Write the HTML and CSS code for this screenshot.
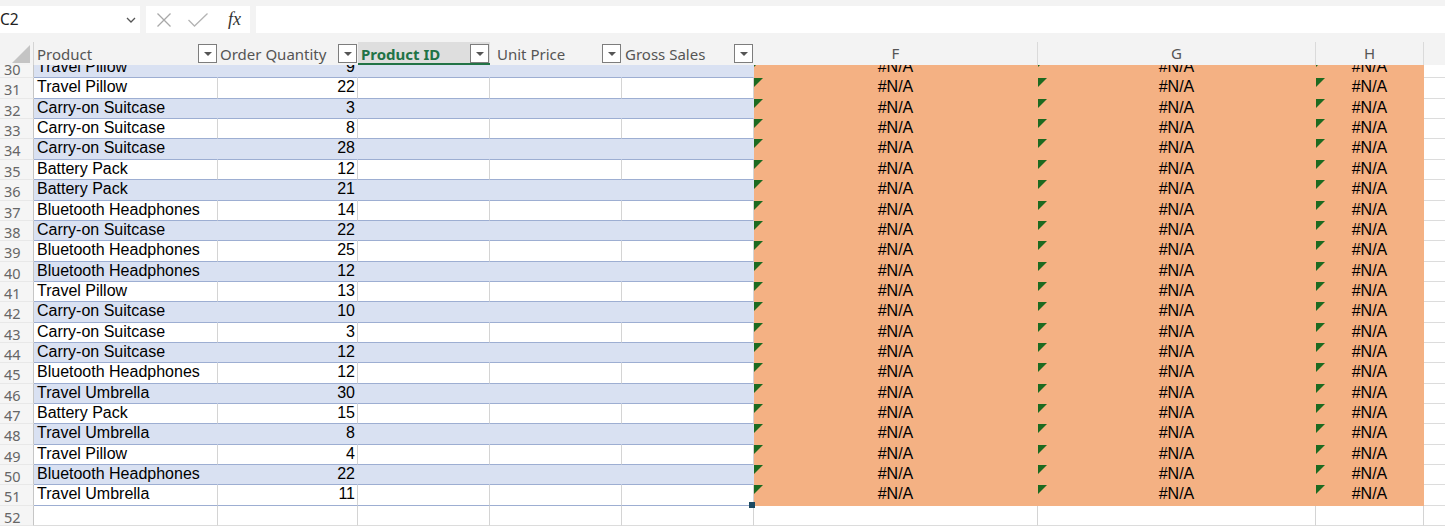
FILE: index.html
```html
<!DOCTYPE html>
<html>
<head>
<meta charset="utf-8">
<link rel="stylesheet" href="styles.css">
</head>
<body>
<div class="app">
  <div class="fbar">
    <div class="namebox">
      <span class="nbtext">C2</span>
      <svg class="chev" width="10" height="6" viewBox="0 0 10 6"><path d="M1 1 L5 5 L9 1" fill="none" stroke="#555" stroke-width="1.3"/></svg>
    </div>
    <div class="fxbox">
      <svg class="ic" width="16" height="16" viewBox="0 0 16 16"><path d="M1.5 1.5 L14.5 14.5 M14.5 1.5 L1.5 14.5" fill="none" stroke="#a8a8a8" stroke-width="1.3"/></svg>
      <svg class="ic" width="22" height="16" viewBox="0 0 22 16"><path d="M1.5 8 L7.5 14 L20.5 1.5" fill="none" stroke="#b4b4b4" stroke-width="1.3"/></svg>
      <span class="fx">fx</span>
    </div>
    <div class="finput"></div>
  </div>

  <div class="colhdr">
    <div class="corner"><svg width="34" height="23" viewBox="0 0 34 23"><polygon points="12,21 30,3 30,21" fill="#c4c4c4"/></svg></div>
    <div class="th"><span>Product</span><span class="flt"></span></div>
    <div class="th tight"><span>Order Quantity</span><span class="flt"></span></div>
    <div class="th sel"><span>Product ID</span><span class="flt"></span></div>
    <div class="th wide"><span>Unit Price</span><span class="flt"></span></div>
    <div class="th"><span>Gross Sales</span><span class="flt"></span></div>
    <div class="col">F</div>
    <div class="col">G</div>
    <div class="col">H</div>
    <div class="col rest"></div>
  </div>

  <div class="body">
    <div class="rows">
      <div class="row b"><div class="rh">30</div><div class="a">Travel Pillow</div><div class="n">9</div><div class="c"></div><div class="c"></div><div class="c"></div><div class="e">#N/A</div><div class="e">#N/A</div><div class="e">#N/A</div><div class="i"></div></div>
      <div class="row"><div class="rh">31</div><div class="a">Travel Pillow</div><div class="n">22</div><div class="c"></div><div class="c"></div><div class="c"></div><div class="e">#N/A</div><div class="e">#N/A</div><div class="e">#N/A</div><div class="i"></div></div>
      <div class="row b"><div class="rh">32</div><div class="a">Carry-on Suitcase</div><div class="n">3</div><div class="c"></div><div class="c"></div><div class="c"></div><div class="e">#N/A</div><div class="e">#N/A</div><div class="e">#N/A</div><div class="i"></div></div>
      <div class="row"><div class="rh">33</div><div class="a">Carry-on Suitcase</div><div class="n">8</div><div class="c"></div><div class="c"></div><div class="c"></div><div class="e">#N/A</div><div class="e">#N/A</div><div class="e">#N/A</div><div class="i"></div></div>
      <div class="row b"><div class="rh">34</div><div class="a">Carry-on Suitcase</div><div class="n">28</div><div class="c"></div><div class="c"></div><div class="c"></div><div class="e">#N/A</div><div class="e">#N/A</div><div class="e">#N/A</div><div class="i"></div></div>
      <div class="row"><div class="rh">35</div><div class="a">Battery Pack</div><div class="n">12</div><div class="c"></div><div class="c"></div><div class="c"></div><div class="e">#N/A</div><div class="e">#N/A</div><div class="e">#N/A</div><div class="i"></div></div>
      <div class="row b"><div class="rh">36</div><div class="a">Battery Pack</div><div class="n">21</div><div class="c"></div><div class="c"></div><div class="c"></div><div class="e">#N/A</div><div class="e">#N/A</div><div class="e">#N/A</div><div class="i"></div></div>
      <div class="row"><div class="rh">37</div><div class="a">Bluetooth Headphones</div><div class="n">14</div><div class="c"></div><div class="c"></div><div class="c"></div><div class="e">#N/A</div><div class="e">#N/A</div><div class="e">#N/A</div><div class="i"></div></div>
      <div class="row b"><div class="rh">38</div><div class="a">Carry-on Suitcase</div><div class="n">22</div><div class="c"></div><div class="c"></div><div class="c"></div><div class="e">#N/A</div><div class="e">#N/A</div><div class="e">#N/A</div><div class="i"></div></div>
      <div class="row"><div class="rh">39</div><div class="a">Bluetooth Headphones</div><div class="n">25</div><div class="c"></div><div class="c"></div><div class="c"></div><div class="e">#N/A</div><div class="e">#N/A</div><div class="e">#N/A</div><div class="i"></div></div>
      <div class="row b"><div class="rh">40</div><div class="a">Bluetooth Headphones</div><div class="n">12</div><div class="c"></div><div class="c"></div><div class="c"></div><div class="e">#N/A</div><div class="e">#N/A</div><div class="e">#N/A</div><div class="i"></div></div>
      <div class="row"><div class="rh">41</div><div class="a">Travel Pillow</div><div class="n">13</div><div class="c"></div><div class="c"></div><div class="c"></div><div class="e">#N/A</div><div class="e">#N/A</div><div class="e">#N/A</div><div class="i"></div></div>
      <div class="row b"><div class="rh">42</div><div class="a">Carry-on Suitcase</div><div class="n">10</div><div class="c"></div><div class="c"></div><div class="c"></div><div class="e">#N/A</div><div class="e">#N/A</div><div class="e">#N/A</div><div class="i"></div></div>
      <div class="row"><div class="rh">43</div><div class="a">Carry-on Suitcase</div><div class="n">3</div><div class="c"></div><div class="c"></div><div class="c"></div><div class="e">#N/A</div><div class="e">#N/A</div><div class="e">#N/A</div><div class="i"></div></div>
      <div class="row b"><div class="rh">44</div><div class="a">Carry-on Suitcase</div><div class="n">12</div><div class="c"></div><div class="c"></div><div class="c"></div><div class="e">#N/A</div><div class="e">#N/A</div><div class="e">#N/A</div><div class="i"></div></div>
      <div class="row"><div class="rh">45</div><div class="a">Bluetooth Headphones</div><div class="n">12</div><div class="c"></div><div class="c"></div><div class="c"></div><div class="e">#N/A</div><div class="e">#N/A</div><div class="e">#N/A</div><div class="i"></div></div>
      <div class="row b"><div class="rh">46</div><div class="a">Travel Umbrella</div><div class="n">30</div><div class="c"></div><div class="c"></div><div class="c"></div><div class="e">#N/A</div><div class="e">#N/A</div><div class="e">#N/A</div><div class="i"></div></div>
      <div class="row"><div class="rh">47</div><div class="a">Battery Pack</div><div class="n">15</div><div class="c"></div><div class="c"></div><div class="c"></div><div class="e">#N/A</div><div class="e">#N/A</div><div class="e">#N/A</div><div class="i"></div></div>
      <div class="row b"><div class="rh">48</div><div class="a">Travel Umbrella</div><div class="n">8</div><div class="c"></div><div class="c"></div><div class="c"></div><div class="e">#N/A</div><div class="e">#N/A</div><div class="e">#N/A</div><div class="i"></div></div>
      <div class="row"><div class="rh">49</div><div class="a">Travel Pillow</div><div class="n">4</div><div class="c"></div><div class="c"></div><div class="c"></div><div class="e">#N/A</div><div class="e">#N/A</div><div class="e">#N/A</div><div class="i"></div></div>
      <div class="row b"><div class="rh">50</div><div class="a">Bluetooth Headphones</div><div class="n">22</div><div class="c"></div><div class="c"></div><div class="c"></div><div class="e">#N/A</div><div class="e">#N/A</div><div class="e">#N/A</div><div class="i"></div></div>
      <div class="row"><div class="rh">51</div><div class="a">Travel Umbrella</div><div class="n">11</div><div class="c"></div><div class="c"></div><div class="c handle"></div><div class="e">#N/A</div><div class="e">#N/A</div><div class="e">#N/A</div><div class="i"></div></div>
      <div class="row empty"><div class="rh">52</div><div class="a"></div><div class="n"></div><div class="c"></div><div class="c"></div><div class="c"></div><div class="w"></div><div class="w"></div><div class="w"></div><div class="i"></div></div>
    </div>
  </div>
</div>
</body>
</html>
```

FILE: styles.css
```css
html, body {
  margin: 0;
  padding: 0;
}
body {
  background: #f3f3f3;
  width: 1445px;
  height: 526px;
  overflow: hidden;
}
.app {
  width: 1445px;
  height: 526px;
  overflow: hidden;
}

/* formula bar */
.fbar {
  display: flex;
  gap: 6px;
  padding-top: 6px;
  height: 27px;
  margin-bottom: 9px;
  background: #f3f3f3;
}
.namebox {
  width: 140px;
  height: 27px;
  background: #fff;
  display: flex;
  align-items: center;
  justify-content: space-between;
  box-sizing: border-box;
  padding-right: 4px;
}
.nbtext {
  font: 15.5px "Noto Sans", sans-serif;
  color: #222;
  line-height: 27px;
}
.chev {
  margin-top: 1px;
}
.fxbox {
  width: 104px;
  height: 27px;
  background: #fff;
  display: flex;
  align-items: center;
  box-sizing: border-box;
  padding-left: 10px;
  gap: 17px;
}
.fxbox .ic:nth-child(2) {
  margin-left: -2px;
}
.fx {
  font: italic 18px "Liberation Serif", serif;
  color: #333;
  margin-left: 2px;
  line-height: 27px;
}
.finput {
  flex: 1;
  height: 27px;
  background: #fff;
}

/* column header */
.colhdr {
  display: grid;
  grid-template-columns: 34px 184px 140px 132px 132px 132px 284px 278px 108px 1fr;
  height: 23px;
  background: #f3f3f3;
}
.corner {
  box-sizing: border-box;
  border-right: 1px solid #d4d4d4;
  height: 23px;
}
.corner svg {
  display: block;
}
.th {
  display: flex;
  align-items: center;
  justify-content: space-between;
  box-sizing: border-box;
  padding-left: 3px;
  padding-right: 1px;
  font: 15px "Noto Sans", sans-serif;
  color: #555;
  white-space: nowrap;
  overflow: hidden;
}
.th.tight {
  padding-left: 2px;
}
.th.wide {
  padding-left: 7px;
}
.th.sel {
  background: #dedede;
  color: #217346;
  font-weight: bold;
  box-shadow: inset 0 -2px 0 #217346;
}
.flt {
  width: 19px;
  height: 19px;
  flex: none;
  box-sizing: border-box;
  border: 1px solid #7d7d7d;
  background: #fff;
  display: flex;
  align-items: center;
  justify-content: center;
}
.flt::after {
  content: "";
  width: 0;
  height: 0;
  border-top: 4px solid #555;
  border-left: 4px solid transparent;
  border-right: 4px solid transparent;
  margin-top: 1px;
}
.col {
  box-sizing: border-box;
  border-right: 1px solid #dadada;
  text-align: center;
  font: 15px "Noto Sans", sans-serif;
  color: #555;
  line-height: 23px;
}
.col.rest {
  border-right: 0;
}

/* body */
.body {
  height: 461px;
  overflow: hidden;
  background: #fff;
}
.rows {
  margin-top: -6.9px;
}
.row {
  display: grid;
  grid-template-columns: 34px 184px 140px 132px 132px 132px 284px 278px 108px 1fr;
  height: 20.35px;
}
.row > div {
  box-sizing: border-box;
  border-right: 1px solid #d4d4d4;
  border-bottom: 1px solid #9daed2;
  overflow: hidden;
  white-space: nowrap;
  font: 16px "Liberation Sans", Arial, sans-serif;
  line-height: 17px;
  color: #000;
  background: #fff;
}
.row > .rh {
  background: #f5f5f5;
  border-right-color: #c6c6c6;
  border-bottom-color: #e8e8e8;
  font: 14.5px "Noto Sans", sans-serif;
  color: #666;
  padding-left: 4px;
  line-height: 22px;
}
.row > .a {
  padding-left: 3px;
}
.row > .n {
  text-align: right;
  padding-right: 2px;
}
.row.b > .a,
.row.b > .n,
.row.b > .c {
  background: #d9e1f2;
  border-right-color: #d9e1f2;
}
.row > .e {
  background: #f4b183;
  border-right-color: #f4b183;
  border-bottom-color: #f4b183;
  text-align: center;
  position: relative;
}
.row > .e::before {
  content: "";
  position: absolute;
  left: 0;
  top: 0;
  width: 0;
  height: 0;
  border-top: 9px solid #1c6a20;
  border-right: 9px solid transparent;
}
.row > .i {
  border-right: 0;
  border-bottom-color: #dcdcdc;
}
.row > .handle {
  position: relative;
  overflow: visible;
}
.row > .handle::after {
  content: "";
  position: absolute;
  right: -2px;
  bottom: -3px;
  width: 6px;
  height: 6px;
  background: #1d4a62;
  z-index: 2;
}
.row.empty > .a,
.row.empty > .n,
.row.empty > .c,
.row.empty > .w {
  border-bottom-color: #dcdcdc;
}
.row > .w {
  background: #fff;
}
```
